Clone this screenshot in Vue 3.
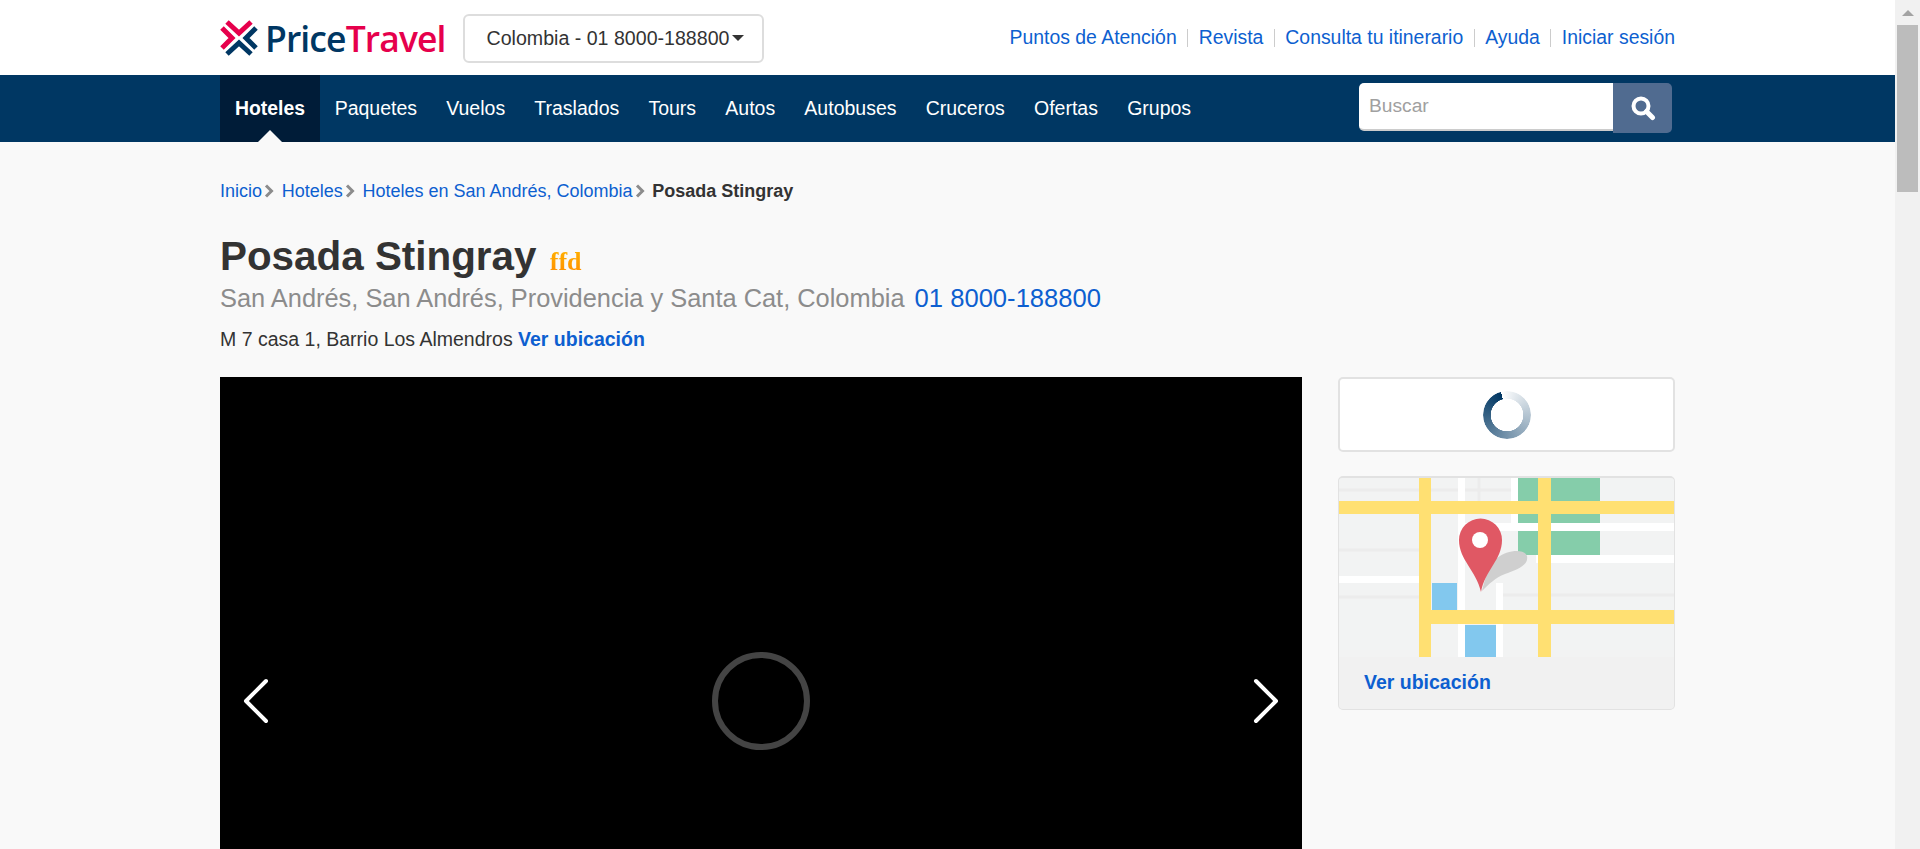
<template>
  <div class="page">
    <div class="main">
      <header class="top">
        <div class="wrap top-in">
          <a class="logo">
            <svg class="logo-mark" viewBox="0 0 38 38" width="38" height="38">
              <g fill="none" stroke-width="5">
                <path d="M7 3 L19 14 L31 3" stroke="#e6004c" />
                <path d="M2 9 L12 19 L2 29" stroke="#e6004c" />
                <path d="M36 9 L26 19 L36 29" stroke="#003763" />
                <path d="M7 35 L19 24 L31 35" stroke="#003763" />
              </g>
            </svg>
            <span class="logo-text">Price<b>Travel</b></span>
          </a>
          <div class="phone">Colombia - 01 8000-188800<i class="caret"></i></div>
          <nav class="links">
            <template v-for="(link, i) in topLinks" :key="link">
              <span v-if="i" class="sep"></span>
              <a>{{ link }}</a>
            </template>
          </nav>
        </div>
      </header>

      <div class="navbar">
        <div class="wrap nav-in">
          <ul class="menu">
            <li v-for="(item, i) in menu" :key="item" :class="{ active: i === 0 }">{{ item }}</li>
          </ul>
          <div class="search">
            <input class="search-input" placeholder="Buscar" />
            <button class="search-btn">
              <svg viewBox="0 0 26 26" width="26" height="26">
                <circle cx="11" cy="11" r="7.5" fill="none" stroke="#fff" stroke-width="4" />
                <path d="M16.5 16.5 L22.5 22.5" stroke="#fff" stroke-width="5" stroke-linecap="round" />
              </svg>
            </button>
          </div>
        </div>
      </div>

      <main class="wrap content">
        <div class="crumbs">
          <template v-for="c in crumbs" :key="c">
            <a>{{ c }}</a>
            <svg class="crumb-arrow" viewBox="0 0 10 14" width="10" height="14">
              <path d="M2 1.5 L7.5 7 L2 12.5" fill="none" stroke="#8c8c8c" stroke-width="3" />
            </svg>
          </template>
          <strong>Posada Stingray</strong>
        </div>

        <h1 class="title">Posada Stingray <span class="stars">ffd</span></h1>
        <div class="location">San Andrés, San Andrés, Providencia y Santa Cat, Colombia <a>01 8000-188800</a></div>
        <div class="address">M 7 casa 1, Barrio Los Almendros <a>Ver ubicación</a></div>

        <div class="columns">
          <div class="gallery">
            <svg class="arrow" viewBox="0 0 30 50" width="30" height="50">
              <path d="M26 5 L6 25 L26 45" fill="none" stroke="#fff" stroke-width="4" stroke-linecap="round" stroke-linejoin="round" />
            </svg>
            <div class="loader"></div>
            <svg class="arrow" viewBox="0 0 30 50" width="30" height="50">
              <path d="M4 5 L24 25 L4 45" fill="none" stroke="#fff" stroke-width="4" stroke-linecap="round" stroke-linejoin="round" />
            </svg>
          </div>

          <aside class="side">
            <div class="rate-box"><div class="spinner"></div></div>
            <div class="map-box">
              <svg class="map" viewBox="0 0 335 179" width="335" height="179">
                <rect width="335" height="179" fill="#f2f3f3" />
                <path d="M0 12H175M0 72H80M164 117H335M0 119H80M140 0V25" stroke="#ececec" stroke-width="3" fill="none" />
                <rect x="119" width="7" height="179" fill="#fff" />
                <rect x="172" width="7" height="45" fill="#fff" />
                <rect x="124" y="45" width="211" height="8" fill="#fff" />
                <rect x="197" y="77" width="138" height="8" fill="#fff" />
                <rect y="98" width="80" height="7" fill="#fff" />
                <rect x="157" y="105" width="7" height="74" fill="#fff" />
                <rect x="179" width="82" height="45" fill="#85cdaa" />
                <rect x="179" y="53" width="82" height="24" fill="#85cdaa" />
                <rect x="93" y="105" width="25" height="27" fill="#82c8ee" />
                <rect x="126" y="147" width="31" height="32" fill="#82c8ee" />
                <rect x="80" width="12" height="179" fill="#ffe072" />
                <rect x="199" width="13" height="179" fill="#ffe072" />
                <rect y="23" width="335" height="13" fill="#ffe072" />
                <rect x="92" y="132" width="243" height="14" fill="#ffe072" />
                <path d="M143 113 C146 100 150 88 158 80 C168 72 185 70 188 78 C190 88 176 92 166 96 C156 100 150 106 143 113 Z" fill="#cfcfcf" />
                <path d="M142 114 C137 92 120 82 120 62 A21.5 21.5 0 0 1 163 62 C163 82 146 92 142 114 Z" fill="#e05864" />
                <circle cx="141" cy="62" r="8" fill="#fff" />
              </svg>
              <div class="map-foot"><a>Ver ubicación</a></div>
            </div>
          </aside>
        </div>
      </main>
    </div>

    <div class="scrollbar">
      <span class="up"></span>
      <span class="thumb"></span>
    </div>
  </div>
</template>

<script setup>
const topLinks = ['Puntos de Atención', 'Revista', 'Consulta tu itinerario', 'Ayuda', 'Iniciar sesión']
const menu = ['Hoteles', 'Paquetes', 'Vuelos', 'Traslados', 'Tours', 'Autos', 'Autobuses', 'Cruceros', 'Ofertas', 'Grupos']
const crumbs = ['Inicio', 'Hoteles', 'Hoteles en San Andrés, Colombia']
</script>

<style>
html, body {
  margin: 0;
  height: 100%;
  overflow: hidden;
}
</style>

<style scoped>
.page {
  display: flex;
  height: 849px;
  overflow: hidden;
  background: #f9f9f9;
  color: #333;
  font-family: "Liberation Sans", Arial, sans-serif;
}
.main {
  flex: 1;
  min-width: 0;
}
.wrap {
  width: 1455px;
  margin: 0 auto;
}
a {
  color: #0d5fd0;
}

.top {
  height: 75px;
  background: #fff;
}
.top-in {
  display: flex;
  align-items: center;
  height: 75px;
}
.logo {
  display: flex;
  align-items: center;
  width: 243px;
}
.logo-mark {
  flex: none;
  margin-top: 1px;
}
.logo-text {
  margin-left: 7px;
  font-family: "Open Sans", sans-serif;
  font-size: 35.5px;
  font-weight: 600;
  letter-spacing: -0.9px;
  color: #003763;
}
.logo-text b {
  font-weight: 600;
  color: #e6004c;
}
.phone {
  display: flex;
  align-items: center;
  justify-content: center;
  box-sizing: border-box;
  width: 301px;
  height: 49px;
  margin-top: 1px;
  padding-left: 4px;
  border: 2px solid #ddd;
  border-radius: 6px;
  font-size: 19.6px;
}
.caret {
  margin-left: 3px;
  border-left: 6px solid transparent;
  border-right: 6px solid transparent;
  border-top: 6px solid #333;
}
.links {
  display: flex;
  align-items: center;
  margin-left: auto;
  font-size: 19.4px;
}
.sep {
  width: 1px;
  height: 18px;
  margin: 0 10.5px;
  background: #ccc;
}

.navbar {
  height: 67px;
  background: #003763;
}
.nav-in {
  display: flex;
  justify-content: space-between;
}
.menu {
  display: flex;
  margin: 0;
  padding: 0;
  list-style: none;
}
.menu li {
  position: relative;
  padding: 0 14.6px;
  font-size: 19.5px;
  line-height: 67px;
  color: #fff;
}
.menu li.active {
  padding: 0 15px;
  background: #001c38;
  font-size: 19.4px;
  font-weight: 700;
}
.menu li.active::after {
  content: "";
  position: absolute;
  left: 50%;
  bottom: 0;
  margin-left: -12px;
  border-left: 12px solid transparent;
  border-right: 12px solid transparent;
  border-bottom: 12px solid #f9f9f9;
}
.search {
  display: flex;
  align-items: flex-start;
  margin: 8px 3px 0 0;
}
.search-input {
  box-sizing: border-box;
  width: 254px;
  height: 48px;
  padding: 0 10px;
  border: 0;
  border-bottom: 2px solid #ccc;
  border-radius: 5px 0 0 5px;
  background: #fff;
  font-family: inherit;
  font-size: 19.2px;
  outline: none;
}
.search-input::placeholder {
  color: #a0a0a0;
}
.search-btn {
  display: flex;
  align-items: center;
  justify-content: center;
  width: 59px;
  height: 50px;
  padding: 0;
  border: 0;
  border-radius: 0 5px 5px 0;
  background: #506b90;
}

.crumbs {
  display: flex;
  align-items: center;
  padding-top: 39px;
  font-size: 18px;
  line-height: 20px;
}
.crumb-arrow {
  margin: 0 7.7px 0 2px;
}
.title {
  margin: 32px 0 0;
  font-size: 40.4px;
  line-height: 46px;
  font-weight: 700;
}
.stars {
  margin-left: 2px;
  font-family: "Liberation Serif", serif;
  font-size: 26px;
  background: linear-gradient(#ffb400, #ff8c00);
  -webkit-background-clip: text;
  background-clip: text;
  color: transparent;
}
.location {
  margin-top: -3px;
  font-size: 25.4px;
  line-height: 32px;
  color: #8c8c8c;
}
.location a {
  margin-left: 3px;
  font-size: 25.6px;
}
.address {
  margin-top: 13px;
  font-size: 19.5px;
  line-height: 24px;
}
.address a {
  font-weight: 700;
}

.columns {
  display: flex;
  justify-content: space-between;
  margin-top: 26px;
}
.gallery {
  display: flex;
  align-items: center;
  justify-content: space-between;
  box-sizing: border-box;
  width: 1082px;
  height: 648px;
  padding: 0 20px;
  background: #000;
}
.loader {
  box-sizing: border-box;
  width: 98px;
  height: 98px;
  border: 6px solid #444;
  border-radius: 50%;
}
.side {
  width: 337px;
}
.rate-box {
  display: flex;
  align-items: center;
  justify-content: center;
  box-sizing: border-box;
  height: 75px;
  border: 2px solid #e2e2e2;
  border-radius: 5px;
  background: #fff;
}
.spinner {
  width: 48px;
  height: 48px;
  border-radius: 50%;
  background: conic-gradient(from -15deg, #fff, #003763);
  -webkit-mask: radial-gradient(circle, transparent 16px, #000 16.5px);
  mask: radial-gradient(circle, transparent 16px, #000 16.5px);
}
.map-box {
  box-sizing: border-box;
  height: 234px;
  margin-top: 24px;
  overflow: hidden;
  border: 1px solid #e2e2e2;
  border-top-width: 2px;
  border-radius: 5px;
  background: #f1f1f1;
}
.map {
  display: block;
}
.map-foot {
  padding: 13px 25px;
  font-size: 19.5px;
  line-height: 24px;
  font-weight: 700;
}

.scrollbar {
  position: relative;
  flex: none;
  width: 25px;
  background: #f1f1f1;
}
.up {
  position: absolute;
  top: 10px;
  left: 7px;
  border-left: 6px solid transparent;
  border-right: 6px solid transparent;
  border-bottom: 6px solid #a3a3a3;
}
.thumb {
  position: absolute;
  top: 25px;
  left: 2px;
  width: 21px;
  height: 167px;
  background: #bcbcbc;
}
</style>
